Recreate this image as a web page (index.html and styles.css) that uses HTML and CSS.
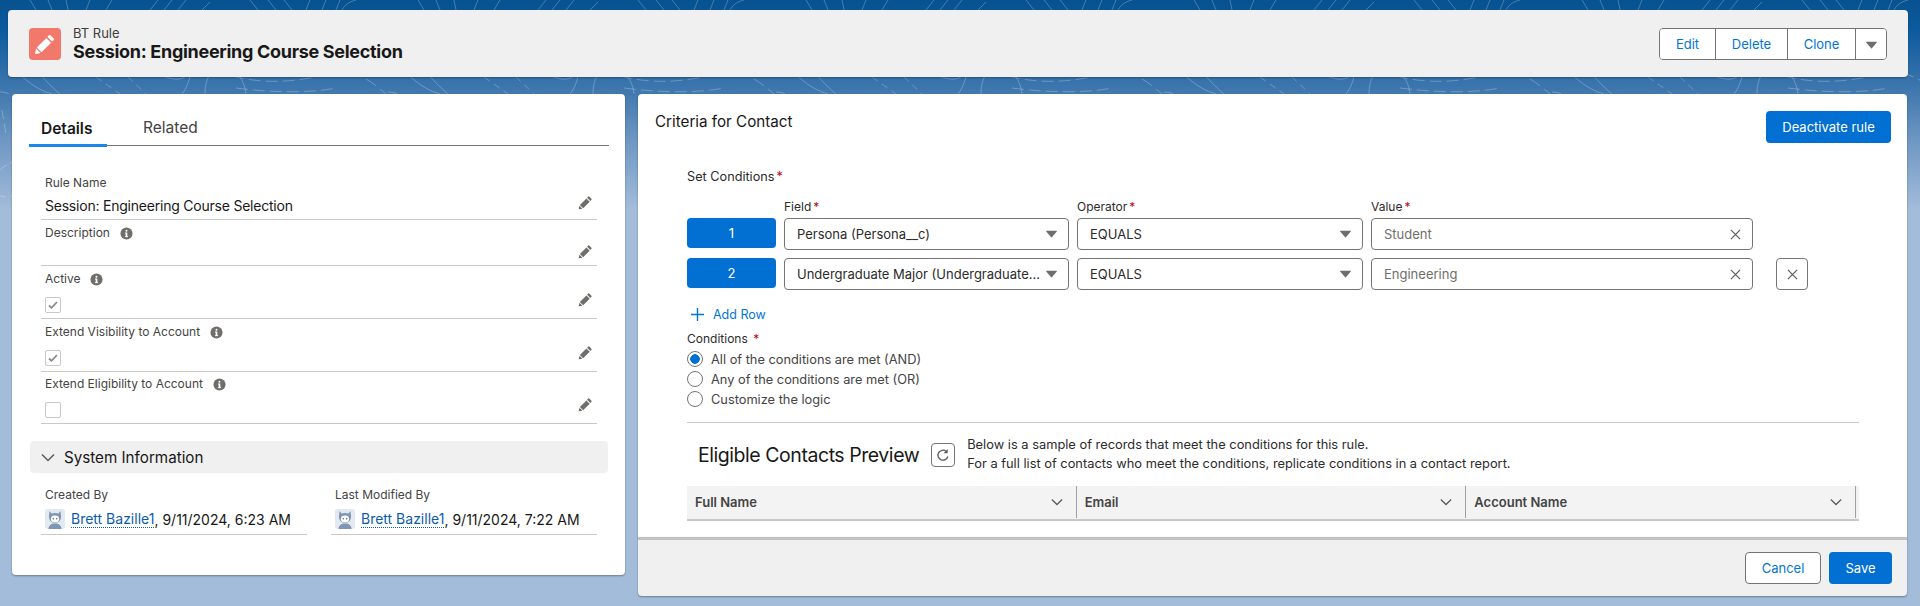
FILE: index.html
```html
<!DOCTYPE html>
<html lang="en">
<head>
  <meta charset="UTF-8">
  <title>BT Rule - Session: Engineering Course Selection</title>
  <link rel="stylesheet" href="styles.css">
</head>
<body>
  <!-- Shared icons -->
  <svg class="sprites" width="0" height="0">
    <symbol id="i-pencil" viewBox="0 0 24 24"><path d="M18 2.5l3.5 3.5a1.2 1.2 0 0 1 0 1.7l-1.7 1.7-5.2-5.2 1.7-1.7a1.2 1.2 0 0 1 1.7 0zM13.5 5.4l5.2 5.2L8.2 21.1l-5.2-5.200zM2.3 17l4.800 4.800-5.100 1.100a.7.7 0 0 1-.8-.8z"/></symbol>
    <symbol id="i-info" viewBox="0 0 14 14"><circle cx="7" cy="7" r="6.5" fill="#706e6b"/><rect x="6.1" y="6" width="1.8" height="4.8" fill="#fff"/><rect x="5.3" y="6" width="1.5" height="1" fill="#fff"/><rect x="5.3" y="9.9" width="3.4" height="1" fill="#fff"/><circle cx="7" cy="4.1" r="1.1" fill="#fff"/></symbol>
    <symbol id="i-tri" viewBox="0 0 12 8"><path d="M.6.5h10.8a.5.5 0 0 1 .4.8L6.4 7.500a.5.5 0 0 1-.8 0L.2 1.300A.5.5 0 0 1 .6.5z"/></symbol>
    <symbol id="i-x" viewBox="0 0 12 12"><path d="M1 1l10 10M11 1L1 11" fill="none" stroke="#5c5c5c" stroke-width="1.3"/></symbol>
    <symbol id="i-chev" viewBox="0 0 14 9"><path d="M1 1.5l6 6 6-6" fill="none" stroke="#5c5c5c" stroke-width="1.5"/></symbol>
    <symbol id="i-check" viewBox="0 0 10 8"><path d="M1 4.500l2.500 2.300L9 1" fill="none" stroke="#8a8a8a" stroke-width="1.8"/></symbol>
    <symbol id="i-avatar" viewBox="0 0 20 20">
      <rect width="20" height="20" rx="3" fill="#e3e9f1"/>
      <path d="M4.500 2l2 2.500h7l2-2.500.6 6a6.100 5.600 0 0 1-12.200 0z" fill="#7f95b3"/>
      <circle cx="10" cy="9" r="5" fill="#7f95b3"/>
      <ellipse cx="10" cy="10" rx="4.100" ry="3.400" fill="#fff"/>
      <circle cx="8.300" cy="9.800" r=".7" fill="#45597a"/><circle cx="11.700" cy="9.800" r=".7" fill="#45597a"/>
      <path d="M3.500 20c0-3.500 2.800-5.500 6.500-5.500s6.500 2 6.500 5.500z" fill="#7f95b3"/>
    </symbol>
  </svg>

  <!-- Page background lines -->
  <svg class="topo" width="1920" height="240">
    <defs>
      <pattern id="topoTile" width="388" height="240" patternUnits="userSpaceOnUse">
        <g fill="none" stroke="#fff" stroke-opacity=".25">
          <path d="M205 94c0-22 12-27 19-27s20 8 22 27"/>
          <path d="M8 60c14 20 30 30 44 34M28 60c10 12 22 26 32 34"/>
          <path d="M96 77l24 17M110 60l36 34" stroke-dasharray="7 5"/>
          <path d="M182 94c8-10 8-20 12-34M150 70c10 4 28 16 38 4s30-10 42-6"/>
          <path d="M232 76c40 10 70 4 98-2s44 10 56 20M236 88c30 4 70 6 100 0" stroke-dasharray="12 5"/>
          <path d="M30 0l6 10M48 0l4 10M66 0l2 10M90 0l-4 10M112 0l-6 10M158 0l-8 10M172 0l-8 10M186 0l-8 10M210 2l-8 8M250 0l8 10M268 0l8 10M284 0l8 10M310 0l-4 10M326 0l-4 10M340 0l-4 10M356 0c-8 2-12 6-14 10"/>
          <path d="M0 92c14 0 20 10 24 24s-4 36-14 48M0 170c12-12 26-6 28 6s-16 24-28 20M2 110l4 24" stroke-dasharray="9 5"/>
        </g>
      </pattern>
    </defs>
    <rect width="1920" height="240" fill="url(#topoTile)"/>
  </svg>

  <!-- Record header -->
  <div class="record-head">
    <div class="record-title">
      <span class="record-icon"><svg width="22" height="22"><use href="#i-pencil"/></svg></span>
      <div>
        <div class="record-type">BT Rule</div>
        <h1>Session: Engineering Course Selection</h1>
      </div>
    </div>
    <div class="btn-group">
      <button class="btn-edit">Edit</button>
      <button class="btn-delete">Delete</button>
      <button class="btn-clone">Clone</button>
      <button class="menu-btn"><svg width="11" height="8"><use href="#i-tri"/></svg></button>
    </div>
  </div>

  <div class="columns">
    <!-- Details card -->
    <div class="card details">
      <div class="tabs">
        <div class="tab active">Details</div>
        <div class="tab">Related</div>
      </div>

      <div class="fields">
        <div class="field rule-name">
          <div>
            <div class="label">Rule Name</div>
            <div class="value">Session: Engineering Course Selection</div>
          </div>
          <svg class="edit" width="15" height="15"><use href="#i-pencil"/></svg>
        </div>
        <div class="field description">
          <div class="label">Description <svg class="info" width="13" height="13"><use href="#i-info"/></svg></div>
          <svg class="edit" width="15" height="15"><use href="#i-pencil"/></svg>
        </div>
        <div class="field check">
          <div>
            <div class="label">Active <svg class="info" width="13" height="13"><use href="#i-info"/></svg></div>
            <span class="checkbox"><svg width="10" height="8"><use href="#i-check"/></svg></span>
          </div>
          <svg class="edit" width="15" height="15"><use href="#i-pencil"/></svg>
        </div>
        <div class="field check">
          <div>
            <div class="label">Extend Visibility to Account <svg class="info" width="13" height="13"><use href="#i-info"/></svg></div>
            <span class="checkbox"><svg width="10" height="8"><use href="#i-check"/></svg></span>
          </div>
          <svg class="edit" width="15" height="15"><use href="#i-pencil"/></svg>
        </div>
        <div class="field check last">
          <div>
            <div class="label">Extend Eligibility to Account <svg class="info" width="13" height="13"><use href="#i-info"/></svg></div>
            <span class="checkbox"></span>
          </div>
          <svg class="edit" width="15" height="15"><use href="#i-pencil"/></svg>
        </div>
      </div>

      <div class="section-head">
        <svg width="14" height="9"><use href="#i-chev"/></svg>
        <span>System Information</span>
      </div>

      <div class="sys-info">
        <div class="sys-field">
          <div class="label">Created By</div>
          <div class="sys-value">
            <svg width="20" height="20"><use href="#i-avatar"/></svg>
            <a href="#">Brett Bazille1</a><span>, 9/11/2024, 6:23 AM</span>
          </div>
        </div>
        <div class="sys-field">
          <div class="label">Last Modified By</div>
          <div class="sys-value">
            <svg width="20" height="20"><use href="#i-avatar"/></svg>
            <a href="#">Brett Bazille1</a><span>, 9/11/2024, 7:22 AM</span>
          </div>
        </div>
      </div>
    </div>

    <div class="right">
      <!-- Criteria card -->
      <div class="card criteria">
        <div class="criteria-head">
          <h2>Criteria for Contact</h2>
          <button class="btn-brand deactivate">Deactivate rule</button>
        </div>

        <div class="criteria-body">
          <div class="set-title">Set Conditions<span class="req">*</span></div>

          <div class="cond-labels">
            <span></span>
            <span>Field<span class="req">*</span></span>
            <span>Operator<span class="req">*</span></span>
            <span>Value<span class="req">*</span></span>
          </div>
          <div class="cond-row">
            <div class="row-num">1</div>
            <div class="select"><span>Persona (Persona__c)</span><svg width="11" height="8"><use href="#i-tri"/></svg></div>
            <div class="select"><span>EQUALS</span><svg width="11" height="8"><use href="#i-tri"/></svg></div>
            <div class="select val"><span>Student</span><svg width="11" height="11"><use href="#i-x"/></svg></div>
          </div>
          <div class="cond-row">
            <div class="row-num">2</div>
            <div class="select"><span>Undergraduate Major (Undergraduate...</span><svg width="11" height="8"><use href="#i-tri"/></svg></div>
            <div class="select"><span>EQUALS</span><svg width="11" height="8"><use href="#i-tri"/></svg></div>
            <div class="select val"><span>Engineering</span><svg width="11" height="11"><use href="#i-x"/></svg></div>
            <button class="row-delete"><svg width="11" height="11"><use href="#i-x"/></svg></button>
          </div>

          <div class="add-row">
            <svg width="13" height="13" viewBox="0 0 13 13"><path d="M6.5 0v13M0 6.5h13" stroke="#0176d3" stroke-width="1.4"/></svg>
            Add Row
          </div>

          <div class="cond-title">Conditions <span class="req">*</span></div>
          <label class="radio"><span class="dot on"></span>All of the conditions are met (AND)</label>
          <label class="radio"><span class="dot"></span>Any of the conditions are met (OR)</label>
          <label class="radio"><span class="dot"></span>Customize the logic</label>

          <div class="preview">
            <h3>Eligible Contacts Preview</h3>
            <button class="refresh">
              <svg width="14" height="14" viewBox="0 0 14 14"><path d="M11.8 8.5A5 5 0 1 1 10 3.2" fill="none" stroke="#5c5c5c" stroke-width="1.3"/><path d="M7.5 5.2h4.200V1z" fill="#5c5c5c"/></svg>
            </button>
            <p>Below is a sample of records that meet the conditions for this rule.<br>For a full list of contacts who meet the conditions, replicate conditions in a contact report.</p>
          </div>

          <div class="table-head">
            <div class="th"><span>Full Name</span><svg width="12" height="8"><use href="#i-chev"/></svg></div>
            <div class="th"><span>Email</span><svg width="12" height="8"><use href="#i-chev"/></svg></div>
            <div class="th"><span>Account Name</span><svg width="12" height="8"><use href="#i-chev"/></svg></div>
          </div>
        </div>
      </div>

      <!-- Footer -->
      <div class="form-footer">
        <button class="btn-neutral">Cancel</button>
        <button class="btn-brand save">Save</button>
      </div>
    </div>
  </div>
</body>
</html>
```

FILE: styles.css
```css
* {
  box-sizing: border-box;
}

html, body {
  height: 606px;
  overflow: hidden;
}

body {
  margin: 0;
  position: relative;
  font-family: Inter, 'Noto Sans', sans-serif;
  font-size: 13px;
  color: #181818;
  background: linear-gradient(#07528f 0, #0c5a9e 30px, #3f77ae 90px, #6e97c3 140px, #a3bcda 210px, #a3bcda 100%);
}

button {
  font-family: inherit;
  cursor: pointer;
}

.sprites {
  position: absolute;
}

.topo {
  position: absolute;
  top: 0;
  left: 0;
}

/* Record header */
.record-head {
  position: relative;
  display: flex;
  justify-content: space-between;
  align-items: center;
  width: 1900px;
  height: 67px;
  margin: 10px 12px 17px 8px;
  padding: 0 21px;
  background: #f0f0f0;
  border-radius: 4px;
  box-shadow: 0 1px 2px rgba(0, 0, 0, 0.3);
}

.record-title {
  display: flex;
  align-items: center;
  gap: 12px;
}

.record-icon {
  display: flex;
  align-items: center;
  justify-content: center;
  width: 32px;
  height: 32px;
  border-radius: 4px;
  background: #f2786b;
  fill: #fff;
}

.record-type {
  font-size: 13px;
  line-height: 16px;
  color: #3e3e3c;
}

h1 {
  margin: 0;
  font-size: 18px;
  line-height: 22px;
  font-weight: 700;
  color: #181818;
  letter-spacing: -0.3px;
}

.btn-group {
  display: flex;
  height: 32px;
  border: 1px solid #747474;
  border-radius: 4px;
  background: #fff;
  overflow: hidden;
}

.btn-group button {
  height: 30px;
  padding: 0;
  border: 0;
  border-right: 1px solid #747474;
  background: #fff;
  color: #0176d3;
  font-size: 13px;
}

.btn-group .btn-edit {
  width: 56px;
}

.btn-group .btn-delete {
  width: 72px;
}

.btn-group .btn-clone {
  width: 68px;
}

.btn-group .menu-btn {
  width: 30px;
  border-right: 0;
  fill: #706e6b;
}

/* Columns */
.columns {
  position: relative;
  display: flex;
  gap: 13px;
  padding-left: 12px;
}

.card {
  background: #fff;
  border-radius: 4px;
  box-shadow: 0 1px 2px rgba(0, 0, 0, 0.35);
}

.details {
  width: 613px;
  height: 481px;
  padding-left: 17px;
}

/* Tabs */
.tabs {
  display: flex;
  width: 580px;
  height: 52px;
  border-bottom: 1px solid #747474;
  font-size: 15.5px;
}

.tab {
  display: flex;
  align-items: center;
  padding: 16px 12px 0;
  color: #444;
  margin-right: 24px;
}

.tab.active {
  width: 78px;
  height: 53px;
  font-weight: 600;
  color: #181818;
  box-shadow: inset 0 -3px 0 #1b86ed;
}

/* Detail fields */
.fields {
  width: 556px;
  margin-left: 12px;
  margin-top: 27px;
}

.field {
  display: flex;
  justify-content: space-between;
  align-items: flex-end;
  padding: 3px 4px 0 4px;
  border-bottom: 1px solid #c9c9c9;
  fill: #706e6b;
}

.label {
  display: flex;
  align-items: center;
  font-size: 12px;
  line-height: 18px;
  color: #444;
}

.info {
  margin-left: 10px;
}

.value {
  margin-top: 5px;
  font-size: 14px;
  line-height: 18px;
  padding-bottom: 3px;
  letter-spacing: -0.22px;
}

.rule-name {
  height: 47px;
  padding-top: 1px;
  padding-bottom: 1px;
}

.rule-name .edit {
  margin-bottom: 8px;
}

.description {
  height: 46px;
  padding-top: 4px;
  align-items: flex-start;
}

.description .edit {
  margin-top: 20px;
}

.check {
  height: 53px;
}

.check.last {
  height: 52px;
}

.check .edit {
  margin-bottom: 11px;
}

.checkbox {
  display: flex;
  align-items: center;
  justify-content: center;
  width: 16px;
  height: 16px;
  margin-top: 9px;
  margin-bottom: 5px;
  border: 1px solid #c9c9c9;
  border-radius: 2px;
  background: #fff;
}

/* System information */
.section-head {
  display: flex;
  align-items: center;
  gap: 9px;
  width: 578px;
  height: 32px;
  margin: 17px 0 0 1px;
  padding-left: 11px;
  background: #f0f0f0;
  border-radius: 4px;
  font-size: 15.2px;
  color: #181818;
}

.sys-info {
  display: flex;
  gap: 24px;
  margin: 13px 0 0 12px;
}

.sys-field {
  width: 266px;
  height: 49px;
  padding-left: 4px;
  border-bottom: 1px solid #c9c9c9;
}

.sys-value {
  display: flex;
  align-items: center;
  height: 24px;
  margin-top: 3px;
  font-size: 14px;
}

.sys-value svg {
  margin-right: 6px;
}

.sys-value a {
  color: #0b5cab;
  text-decoration: none;
  border-bottom: 1px dotted #0b5cab;
  line-height: 16px;
}

/* Right column */
.right {
  width: 1269px;
}

.criteria {
  height: 443px;
  border-radius: 4px 4px 0 0;
}

.criteria-head {
  display: flex;
  justify-content: space-between;
  align-items: flex-start;
  padding: 17px 16px 0 17px;
}

h2 {
  margin: 1px 0 0;
  font-size: 15.2px;
  line-height: 20px;
  font-weight: 400;
}

.btn-brand {
  height: 32px;
  border: 0;
  border-radius: 4px;
  background: #0170d2;
  color: #fff;
  font-size: 13px;
}

.deactivate {
  width: 125px;
}

.criteria-body {
  padding: 0 48px 0 49px;
}

.set-title {
  margin-top: 25px;
  font-size: 12.7px;
  line-height: 18px;
  color: #2b2b2b;
}

.req {
  margin-left: 2px;
  color: #ba0517;
}

.cond-labels, .cond-row {
  display: grid;
  grid-template-columns: 89px 285px 286px 382px 32px;
  column-gap: 8px;
}

.cond-labels {
  margin-top: 12px;
  height: 20px;
  font-size: 12px;
  line-height: 18px;
  color: #2b2b2b;
}

.cond-row {
  height: 32px;
  margin-bottom: 8px;
}

.row-num {
  display: flex;
  align-items: center;
  justify-content: center;
  height: 30px;
  border-radius: 4px;
  background: #0170d2;
  color: #fff;
  font-size: 13px;
}

.select {
  display: flex;
  align-items: center;
  justify-content: space-between;
  padding: 0 11px 0 12px;
  border: 1px solid #747474;
  border-radius: 4px;
  background: #fff;
  fill: #706e6b;
  font-size: 13px;
  color: #2b2b2b;
  white-space: nowrap;
  overflow: hidden;
}

.select.val {
  color: #706e6b;
}

.row-delete {
  display: flex;
  align-items: center;
  justify-content: center;
  width: 32px;
  height: 32px;
  margin-left: 15px;
  padding: 0;
  border: 1px solid #747474;
  border-radius: 4px;
  background: #fff;
}

.add-row {
  display: flex;
  align-items: center;
  gap: 9px;
  height: 32px;
  padding-left: 4px;
  color: #0176d3;
  font-size: 12.5px;
}

.cond-title {
  font-size: 12px;
  line-height: 18px;
  color: #2b2b2b;
}

.radio {
  display: flex;
  align-items: center;
  gap: 8px;
  height: 20px;
  font-size: 12.8px;
  color: #444;
}

.cond-title + .radio {
  margin-top: 1px;
}

.dot {
  width: 16px;
  height: 16px;
  border: 1px solid #747474;
  border-radius: 50%;
  background: #fff;
}

.dot.on {
  background: radial-gradient(circle, #0170d2 0, #0170d2 4.5px, #fff 5px);
}

.preview {
  display: flex;
  align-items: center;
  height: 52px;
  margin-top: 13px;
  padding: 13px 0 0 11px;
  border-top: 1px solid #c9c9c9;
}

h3 {
  margin: 0;
  font-size: 19.5px;
  line-height: 26px;
  font-weight: 400;
  letter-spacing: -0.45px;
}

.refresh {
  display: flex;
  align-items: center;
  justify-content: center;
  width: 24px;
  height: 24px;
  margin-left: 12px;
  padding: 0;
  border: 1px solid #747474;
  border-radius: 4px;
  background: #fff;
}

.preview p {
  margin: -2px 0 0 12px;
  font-size: 12.85px;
  line-height: 19px;
  color: #2b2b2b;
}

.table-head {
  display: flex;
  height: 35px;
  margin-top: 12px;
  padding-right: 3px;
  background: #f3f3f3;
  border-bottom: 2px solid #c9c9c9;
}

.th {
  display: flex;
  align-items: center;
  justify-content: space-between;
  flex: 1;
  height: 32px;
  padding: 0 13px 0 8px;
  border-right: 1px solid #a0a0a0;
  font-size: 13px;
  font-weight: 600;
  color: #444;
}

/* Footer */
.form-footer {
  display: flex;
  justify-content: flex-end;
  gap: 8px;
  height: 59px;
  padding: 12px 15px 0 0;
  background: #f0f0f0;
  border-top: 3px solid #c2c2c2;
  border-radius: 0 0 4px 4px;
  box-shadow: 0 1px 2px rgba(0, 0, 0, 0.35);
}

.btn-neutral {
  width: 76px;
  height: 32px;
  border: 1px solid #747474;
  border-radius: 4px;
  background: #fff;
  color: #0176d3;
  font-size: 13px;
}

.save {
  width: 63px;
}
```
